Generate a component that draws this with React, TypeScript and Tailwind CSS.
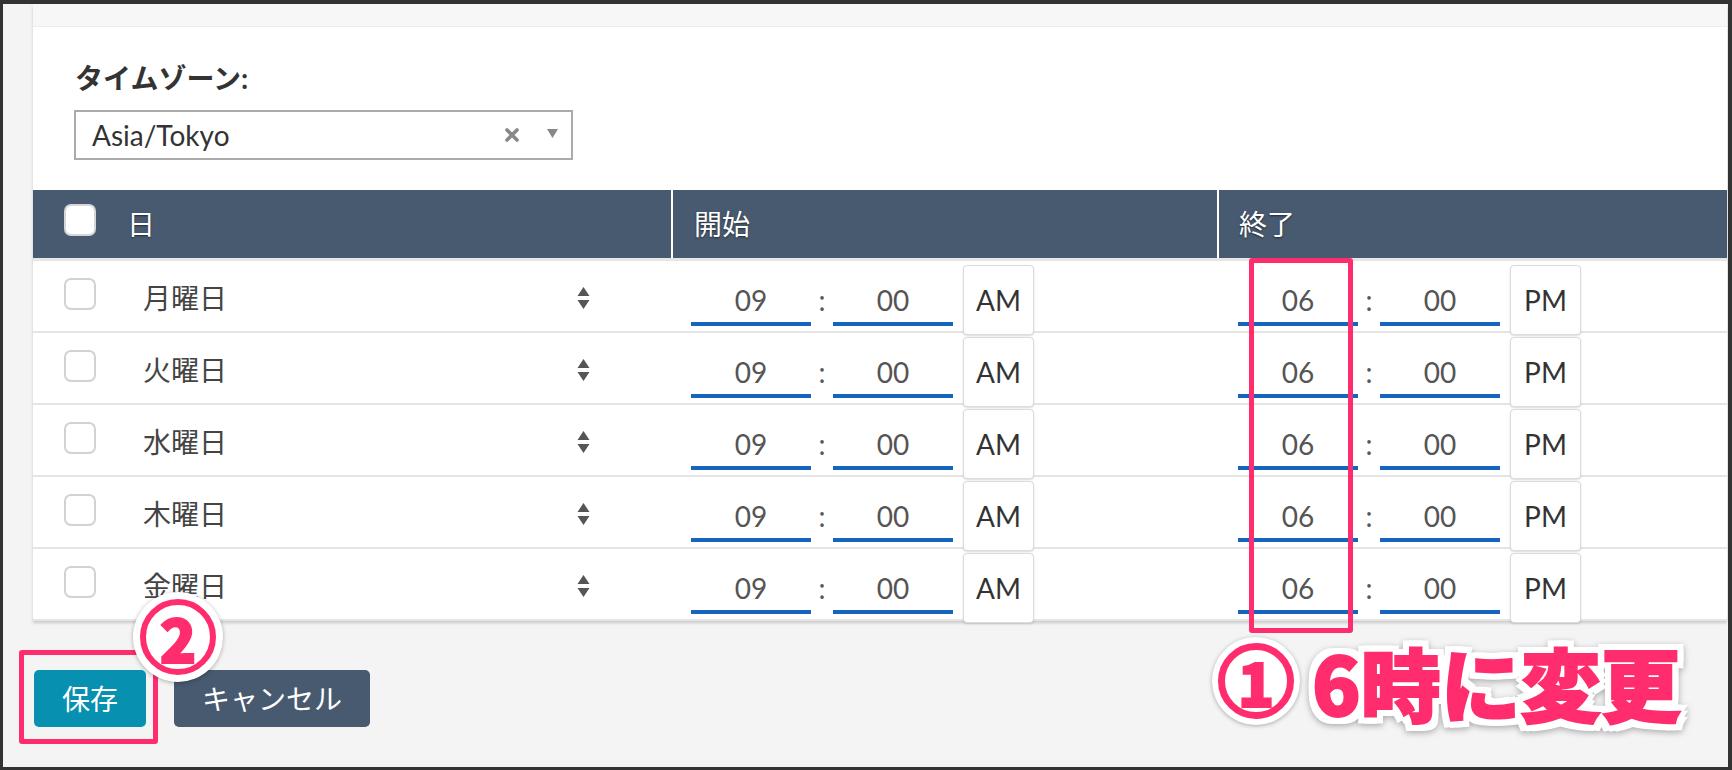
import React from 'react';

const DAYS = ['月曜日', '火曜日', '水曜日', '木曜日', '金曜日'];

const SortIcon = () => (
  <svg width="13" height="24" viewBox="0 0 13 24" className="shrink-0">
    <path d="M6.5 1 L12.5 10 H0.5 Z" fill="#555" />
    <path d="M0.5 14 H12.5 L6.5 23 Z" fill="#555" />
  </svg>
);

const TimeField = ({ value }: { value: string }) => (
  <div className="mt-[17px] flex h-[48px] w-[120px] items-center justify-center border-b-4 border-[#1565c0] text-[28px] text-[#555]">
    {value}
  </div>
);

const TimeGroup = ({ hour, minute, meridiem, offset }: { hour: string; minute: string; meridiem: string; offset: string }) => (
  <div className={`flex items-start ${offset}`}>
    <TimeField value={hour} />
    <div className="mt-[17px] flex h-[44px] w-[22px] items-center justify-center text-[28px] text-[#555]">:</div>
    <TimeField value={minute} />
    <div className="ml-[10px] mt-[4px] flex h-[70px] w-[71px] items-center justify-center rounded-[4px] border border-[#dcdcdc] bg-white text-[28px] text-[#333] shadow-[0_1px_2px_rgba(0,0,0,0.15)]">
      {meridiem}
    </div>
  </div>
);

const Checkbox = ({ header }: { header?: boolean }) => (
  <span
    className={`block h-[32px] w-[32px] shrink-0 rounded-[7px] border-2 bg-white ${
      header ? 'mb-[8px] border-[#d6d6d6]' : 'mb-[9px] border-[#d2d2d2]'
    }`}
  />
);

export default function App() {
  return (
    <div className="relative h-[770px] w-[1732px] overflow-hidden bg-[#333] pb-[3px] pl-[3px] pr-[4px] pt-[4px] font-['Lato','Noto_Sans_CJK_JP',sans-serif]">
      <div className="h-full bg-[#f4f4f4] pl-[30px] pr-[1px]">
        <div className="bg-white shadow-[0_2px_3px_rgba(0,0,0,0.18)]">
          <div className="h-[23px] border-b border-[#ececec] bg-[#f7f7f7]" />
          <div className="pl-[41px] pt-[31px]">
            <div className="pl-[1px] text-[28px] font-bold leading-[40px] text-[#333]">タイムゾーン:</div>
            <div className="mt-[12px] flex h-[50px] w-[499px] items-center border-2 border-[#aaa] pl-[16px] pr-[13px]">
              <span className="text-[28px] text-[#333]">Asia/Tokyo</span>
              <svg width="16" height="16" viewBox="0 0 16 16" className="ml-auto">
                <path d="M3 3 L13 13 M13 3 L3 13" stroke="#888" strokeWidth="3.6" strokeLinecap="round" />
              </svg>
              <svg width="11" height="9" viewBox="0 0 11 9" className="ml-[27px] -mt-[4px]">
                <path d="M0 0 H11 L5.5 9 Z" fill="#888" />
              </svg>
            </div>
          </div>

          <div className="mt-[30px]">
            <div className="grid h-[71px] grid-cols-[640px_546px_1fr] border-b-[3px] border-[#e6e6e6] bg-[#485a70] text-[28px] text-white [text-shadow:0_1px_2px_rgba(0,0,0,0.55)]">
              <div className="flex items-center border-r-2 border-white pl-[31px]">
                <Checkbox header />
                <span className="ml-[31px]">日</span>
              </div>
              <div className="flex items-center border-r-2 border-white pl-[21px]">開始</div>
              <div className="flex items-center pl-[20px]">終了</div>
            </div>

            {DAYS.map(day => (
              <div key={day} className="grid h-[72px] grid-cols-[640px_546px_1fr] border-b-2 border-[#e5e5e5]">
                <div className="flex items-center pl-[31px]">
                  <Checkbox />
                  <span className="ml-[47px] flex-1 text-[28px] text-[#444]">{day}</span>
                  <span className="mr-[83px]">
                    <SortIcon />
                  </span>
                </div>
                <TimeGroup hour="09" minute="00" meridiem="AM" offset="pl-[18px]" />
                <TimeGroup hour="06" minute="00" meridiem="PM" offset="pl-[19px]" />
              </div>
            ))}
          </div>
        </div>

        <div className="mt-[49px] flex gap-[28px] pl-[1px] text-[28px] text-white [text-shadow:0_1px_2px_rgba(0,0,0,0.4)]">
          <button className="flex h-[57px] w-[112px] items-center justify-center rounded-[5px] bg-[#0790b0]">保存</button>
          <button className="flex h-[57px] w-[196px] items-center justify-center rounded-[5px] bg-[#485a70]">キャンセル</button>
        </div>
      </div>

      {/* annotations drawn over the screenshot */}
      <div className="absolute left-[1249px] top-[258px] h-[375px] w-[104px] rounded-[3px] border-[5px] border-[#ff2d6e]" />
      <div className="absolute left-[19px] top-[650px] h-[94px] w-[139px] rounded-[3px] border-[5px] border-[#ff2d6e]" />

      <div className="absolute left-[133px] top-[592px] flex h-[90px] w-[90px] items-center justify-center rounded-full bg-white shadow-[0_1px_4px_rgba(0,0,0,0.3)]">
        <div className="flex h-[76px] w-[76px] items-center justify-center rounded-full border-[6px] border-[#ff2d6e] bg-white font-['Noto_Sans_CJK_JP',sans-serif] text-[60px] font-black leading-none text-[#ff2d6e] [-webkit-text-stroke:2px_#ff2d6e]">
          2
        </div>
      </div>

      <div className="absolute left-[1212px] top-[637px] flex items-center gap-[12px]">
        <div className="flex h-[88px] w-[88px] items-center justify-center rounded-full bg-white shadow-[0_1px_4px_rgba(0,0,0,0.3)]">
          <div className="flex h-[76px] w-[76px] items-center justify-center rounded-full border-[7px] border-[#ff2d6e] bg-white font-['Noto_Sans_CJK_JP',sans-serif] text-[60px] font-black leading-none text-[#ff2d6e] [-webkit-text-stroke:2px_#ff2d6e]">
            1
          </div>
        </div>
        <span className="font-['Noto_Sans_CJK_JP',sans-serif] text-[80px] font-black leading-none text-[#ff2d6e] [-webkit-text-stroke:2px_#ff2d6e] [filter:drop-shadow(6px_0_0_#fff)_drop-shadow(-6px_0_0_#fff)_drop-shadow(0_6px_0_#fff)_drop-shadow(0_-6px_0_#fff)_drop-shadow(0_2px_3px_rgba(0,0,0,0.3))]">
          6時に変更
        </span>
      </div>
    </div>
  );
}
